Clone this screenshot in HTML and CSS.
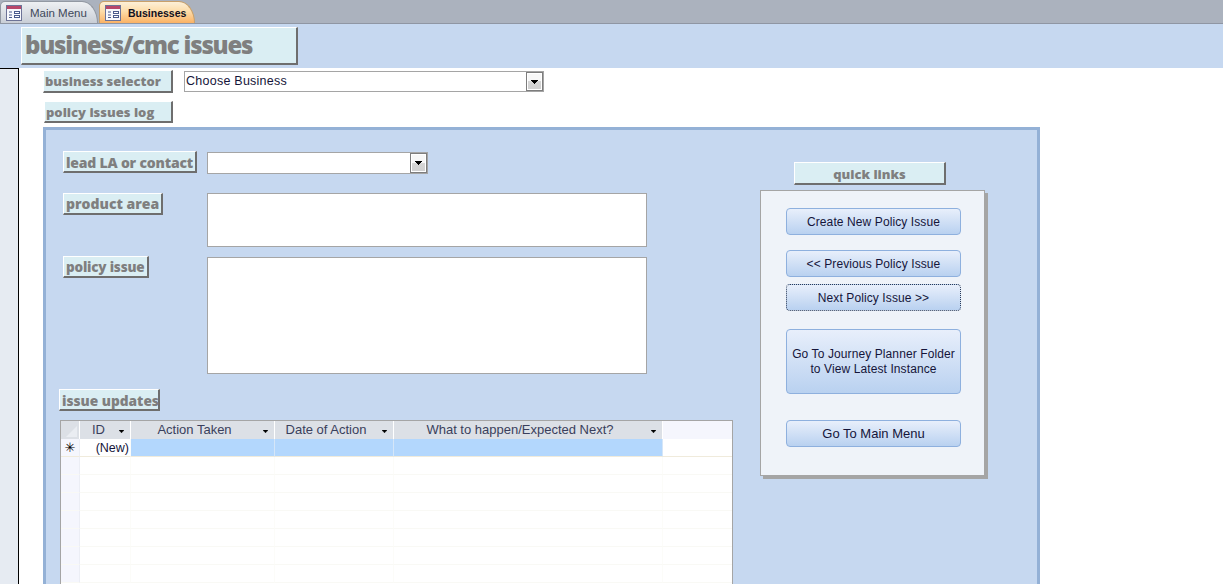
FILE: index.html
```html
<!DOCTYPE html>
<html lang="en">
<head>
<meta charset="utf-8">
<title>Businesses</title>
<link rel="stylesheet" href="styles.css">
</head>
<body>
<svg class="defs" width="0" height="0" aria-hidden="true">
  <symbol id="form-icon" viewBox="0 0 16 16">
    <rect x="0.5" y="0.5" width="15" height="15" fill="#f7f8fc" stroke="#6d7397"/>
    <rect x="1" y="1" width="14" height="3" fill="#b8476a"/>
    <path d="M3 7h3M3 10h3M3 12.500h3" stroke="#4a5a8c"/>
    <rect x="8.500" y="6.500" width="5" height="2" fill="#fff" stroke="#4a5a8c"/>
    <rect x="8.500" y="10.500" width="5" height="2" fill="#fff" stroke="#4a5a8c"/>
  </symbol>
  <symbol id="arrow" viewBox="0 0 7 4">
    <path d="M0 0h7v1h-1v1h-1v1h-1v1h-1v-1h-1v-1h-1v-1h-1z" fill="#000"/>
  </symbol>
</svg>

<nav class="tabbar">
  <div class="tab tab-idle"><svg class="tab-icon"><use href="#form-icon"/></svg><span>Main Menu</span></div>
  <div class="tab tab-active"><svg class="tab-icon"><use href="#form-icon"/></svg><span>Businesses</span></div>
</nav>

<header class="form-header">
  <h1 class="label label-title">business/cmc issues</h1>
</header>

<div class="form-body">
  <aside class="rail"></aside>
  <main class="content">
    <div class="selector-row">
      <div class="label label-selector">business selector</div>
      <div class="combo combo-business">
        <span class="combo-text">Choose Business</span>
        <span class="combo-btn"><svg class="combo-arrow"><use href="#arrow"/></svg></span>
      </div>
    </div>
    <div class="label label-log">policy issues log</div>

    <section class="panel">
      <div class="panel-left">
        <div class="field-row field-lead">
          <div class="label-col"><div class="label label-lead">lead LA or contact</div></div>
          <div class="combo combo-lead">
            <span class="combo-text"></span>
            <span class="combo-btn"><svg class="combo-arrow"><use href="#arrow"/></svg></span>
          </div>
        </div>
        <div class="field-row field-product">
          <div class="label-col"><div class="label label-product">product area</div></div>
          <div class="textbox textbox-product"></div>
        </div>
        <div class="field-row field-issue">
          <div class="label-col"><div class="label label-issue">policy issue</div></div>
          <div class="textbox textbox-issue"></div>
        </div>
        <div class="label label-updates">issue updates</div>
        <div class="datasheet">
          <div class="ds-row ds-head">
            <div class="ds-cell ds-sel"><span class="ds-corner"></span></div>
            <div class="ds-cell ds-id"><span class="ds-title">ID</span><svg class="ds-arrow"><use href="#arrow"/></svg></div>
            <div class="ds-cell ds-action"><span class="ds-title">Action Taken</span><svg class="ds-arrow"><use href="#arrow"/></svg></div>
            <div class="ds-cell ds-date"><span class="ds-title">Date of Action</span><svg class="ds-arrow"><use href="#arrow"/></svg></div>
            <div class="ds-cell ds-what"><span class="ds-title">What to happen/Expected Next?</span><svg class="ds-arrow"><use href="#arrow"/></svg></div>
            <div class="ds-cell ds-rest"></div>
          </div>
          <div class="ds-row ds-new">
            <div class="ds-cell ds-sel ds-star">✳</div>
            <div class="ds-cell ds-id ds-newid">(New)</div>
            <div class="ds-cell ds-action ds-blue"></div>
            <div class="ds-cell ds-date ds-blue"></div>
            <div class="ds-cell ds-what ds-blue"></div>
            <div class="ds-cell ds-rest"></div>
          </div>
          <div class="ds-row"><div class="ds-cell ds-sel"></div><div class="ds-cell ds-id"></div><div class="ds-cell ds-action"></div><div class="ds-cell ds-date"></div><div class="ds-cell ds-what"></div><div class="ds-cell ds-rest"></div></div>
          <div class="ds-row"><div class="ds-cell ds-sel"></div><div class="ds-cell ds-id"></div><div class="ds-cell ds-action"></div><div class="ds-cell ds-date"></div><div class="ds-cell ds-what"></div><div class="ds-cell ds-rest"></div></div>
          <div class="ds-row"><div class="ds-cell ds-sel"></div><div class="ds-cell ds-id"></div><div class="ds-cell ds-action"></div><div class="ds-cell ds-date"></div><div class="ds-cell ds-what"></div><div class="ds-cell ds-rest"></div></div>
          <div class="ds-row"><div class="ds-cell ds-sel"></div><div class="ds-cell ds-id"></div><div class="ds-cell ds-action"></div><div class="ds-cell ds-date"></div><div class="ds-cell ds-what"></div><div class="ds-cell ds-rest"></div></div>
          <div class="ds-row"><div class="ds-cell ds-sel"></div><div class="ds-cell ds-id"></div><div class="ds-cell ds-action"></div><div class="ds-cell ds-date"></div><div class="ds-cell ds-what"></div><div class="ds-cell ds-rest"></div></div>
          <div class="ds-row"><div class="ds-cell ds-sel"></div><div class="ds-cell ds-id"></div><div class="ds-cell ds-action"></div><div class="ds-cell ds-date"></div><div class="ds-cell ds-what"></div><div class="ds-cell ds-rest"></div></div>
          <div class="ds-row"><div class="ds-cell ds-sel"></div><div class="ds-cell ds-id"></div><div class="ds-cell ds-action"></div><div class="ds-cell ds-date"></div><div class="ds-cell ds-what"></div><div class="ds-cell ds-rest"></div></div>
        </div>
      </div>

      <div class="panel-right">
        <div class="label label-quick">quick links</div>
        <div class="links-card">
          <button class="link-btn btn-create" type="button">Create New Policy Issue</button>
          <button class="link-btn btn-prev" type="button">&lt;&lt; Previous Policy Issue</button>
          <button class="link-btn btn-next" type="button">Next Policy Issue &gt;&gt;</button>
          <button class="link-btn btn-journey" type="button">Go To Journey Planner Folder<br>to View Latest Instance</button>
          <button class="link-btn btn-main" type="button">Go To Main Menu</button>
        </div>
      </div>
    </section>
  </main>
</div>
</body>
</html>
```

FILE: styles.css
```css
* { box-sizing: border-box; }
html, body { margin: 0; padding: 0; height: 584px; overflow: hidden; background: #fff; }
body { font-family: "Liberation Sans", Arial, sans-serif; font-size: 12px; color: #15153a; }
.defs { position: absolute; }

/* tab strip */
.tabbar { height: 24px; background: #abb2be; display: flex; align-items: flex-end; gap: 1px; padding-top: 1px; border-bottom: 1px solid #8f96a3; }
.tab { height: 22px; display: flex; align-items: center; border: 1px solid #9298a2; border-bottom: 0; border-radius: 5px 16px 0 0 / 5px 22px 0 0; }
.tab-idle { width: 98px; padding-left: 5px; gap: 8px; background: linear-gradient(#eef0f3, #c9ced6); color: #40485a; font-size: 11.5px; }
.tab-active { width: 96px; padding-left: 5px; gap: 7px; background: linear-gradient(#fdf0d8 0, #fddca8 45%, #fbb265 100%); color: #101020; font-weight: 700; font-size: 10.5px; border-color: #c9a06a; }
.tab-icon { width: 16px; height: 16px; flex: none; }

/* form header */
.form-header { height: 44px; background: #c6d8f0; padding: 3px 0 0 21px; }

/* raised labels */
.label { background: #daeef3; color: #7f7f7f; font-family: "Open Sans", "DejaVu Sans", sans-serif; font-weight: 800; font-size: 13px; line-height: 1; display: flex; align-items: center; border-style: solid; border-width: 1px 2px 2px 1px; border-color: #fff #6e6e6e #6e6e6e #fff; white-space: nowrap; padding-top: 1px; }
.label-title { margin: 0; width: 277px; height: 38px; font-size: 24px; letter-spacing: -1.2px; padding: 0 0 1px 3px; }
.label-selector { width: 130px; height: 23px; padding-left: 1px; }
.label-log { width: 129px; height: 22px; margin: 8px 0 0 0; padding-left: 1px; }
.label-lead { width: 134px; height: 22px; padding: 2px 0 0 2px; font-size: 14px; letter-spacing: -0.2px; }
.label-product { width: 100px; height: 22px; padding-left: 2px; font-size: 14px; }
.label-issue { width: 86px; height: 22px; padding: 3px 0 0 2px; font-size: 13.5px; letter-spacing: -0.2px; }
.label-updates { width: 101px; height: 22px; padding: 2px 0 0 2px; margin: 15px 0 0 -4px; font-size: 13.7px; }
.label-quick { width: 152px; height: 23px; justify-content: center; margin-left: 34px; padding-top: 2px; padding-left: 0; }

/* main layout */
.form-body { display: flex; height: 516px; }
.rail { width: 19px; flex: none; background: #e6ebf2; border-top: 1px solid #000; border-right: 1px solid #000; }
.content { flex: 1; min-width: 0; padding: 2px 0 0 25px; }
.selector-row { display: flex; align-items: flex-start; margin-left: -1px; gap: 11px; }

/* combos */
.combo { background: #fff; border: 1px solid #a5a5a5; display: flex; justify-content: space-between; }
.combo-business { width: 360px; height: 21px; margin-top: 1px; }
.combo-lead { width: 221px; height: 22px; }
.combo-text { padding: 1px 0 0 1px; font-size: 12.5px; letter-spacing: 0.25px; line-height: 16px; color: #15153a; }
.combo-btn { width: 17px; flex: none; height: 100%; border: 1px solid #7d7d7d; outline: 0; background: linear-gradient(#f7f7f7 0, #f7f7f7 50%, #d6d6d6 50%, #d0d0d0 100%); box-shadow: inset 0 0 0 1px #fff; display: flex; align-items: center; justify-content: center; }
.combo-arrow { width: 7px; height: 4px; }

/* panel */
.panel { display: flex; width: 997px; height: 470px; margin: 4px 0 0 -1px; background: #c6d8f0; border: solid #94b1d6; border-width: 3px 3px 0 3px; padding: 21px 0 0 17px; }
.panel-left { width: 673px; flex: none; }
.panel-right { width: 240px; flex: none; margin-left: 24px; padding-top: 11px; }

.field-row { display: flex; align-items: flex-start; }
.label-col { width: 144px; flex: none; }
.field-lead .combo { margin-top: 1px; }
.field-product { margin-top: 19px; }
.field-issue { margin-top: 9px; }
.field-issue .textbox { margin-top: 1px; }
.textbox { width: 440px; background: #fff; border: 1px solid #a5a5a5; }
.textbox-product { height: 54px; }
.textbox-issue { height: 117px; }

/* datasheet */
.datasheet { width: 673px; height: 164px; margin: 9px 0 0 -3px; background: #fff; border: 1px solid #a5a5a5; border-bottom: 0; overflow: hidden; }
.ds-row { display: flex; height: 18px; }
.ds-cell { height: 18px; border-right: 1px solid #fcfcf9; border-bottom: 1px solid #f9f9f5; flex: none; }
.ds-sel { width: 19px; background: #f5f6fd; border-right-color: #eceef5; }
.ds-id { width: 51px; }
.ds-action { width: 144px; }
.ds-date { width: 119px; }
.ds-what { width: 269px; }
.ds-rest { flex: 1; border-right: 0; }
.ds-head { color: #3a3f5c; font-size: 13px; }
.ds-head .ds-cell { background: #dce0e6; border-right: 1px solid #fff; border-bottom: 0; display: flex; align-items: center; }
.ds-head .ds-sel { background: #dce0e6; }
.ds-head .ds-rest { background: #f5f6fd; border-right: 0; }
.ds-corner { width: 0; height: 0; margin-left: 5px; margin-top: 2px; border-style: solid; border-width: 0 0 11px 11px; border-color: transparent transparent #eaedf2 transparent; }
.ds-title { flex: 1; text-align: center; padding: 0 5px 2px 0; }
.ds-id .ds-title { padding-right: 2px; }
.ds-arrow { width: 5px; height: 3px; flex: none; margin-right: 6px; margin-top: 2px; }
.ds-new .ds-cell { border-bottom-color: #f0ebdc; }
.ds-star { font-size: 13px; line-height: 18px; text-align: center; color: #000; font-family: "DejaVu Sans", sans-serif; }
.ds-newid { text-align: right; padding-right: 1px; color: #15153a; line-height: 18px; font-size: 12.5px; }
.ds-blue { background: #b3d7fd; border-right-color: #d5e6f8; }

/* quick links */
.links-card { width: 225px; height: 286px; margin-top: 5px; background: #eff3f9; border: 1px solid #a5a5a5; box-shadow: 3px 3px 0 #a5a5a5; padding: 17px 0 0 25px; display: flex; flex-direction: column; align-items: flex-start; }
.link-btn { width: 175px; height: 27px; padding: 1px 0 0; border: 1px solid #8eb0de; border-radius: 4px; background: linear-gradient(#e8effb, #b9d1f0); color: #15153a; font-family: "Liberation Sans", Arial, sans-serif; font-size: 12px; letter-spacing: 0.1px; line-height: 15px; text-align: center; }
.btn-prev { margin-top: 15px; }
.btn-next { margin-top: 7px; border: 1px dotted #2b3a55; }
.btn-journey { height: 65px; margin-top: 18px; }
.btn-main { margin-top: 26px; font-size: 13px; letter-spacing: 0; padding-top: 0; }
```
